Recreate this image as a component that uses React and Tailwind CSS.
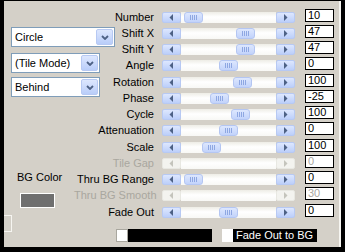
import React from "react";

const rows = [
  { label: "Number", value: "10", thumb: 22 },
  { label: "Shift X", value: "47", thumb: 74 },
  { label: "Shift Y", value: "47", thumb: 74 },
  { label: "Angle", value: "0", thumb: 57 },
  { label: "Rotation", value: "100", thumb: 71 },
  { label: "Phase", value: "-25", thumb: 48 },
  { label: "Cycle", value: "100", thumb: 69 },
  { label: "Attenuation", value: "0", thumb: 57 },
  { label: "Scale", value: "100", thumb: 40 },
  { label: "Tile Gap", value: "0", disabled: true },
  { label: "Thru BG Range", value: "0", thumb: 22 },
  { label: "Thru BG Smooth", value: "30", disabled: true },
  { label: "Fade Out", value: "0", thumb: 57 },
];

function Arrow({ dir, disabled }) {
  return (
    <div
      className={`w-[19px] h-full shrink-0 rounded-[2px] border flex items-center justify-center ${
        disabled
          ? "border-[#e8e8e2] bg-[#f3f3ef]"
          : "border-[#b7c9f3] bg-[linear-gradient(#dde7fe,#bccffa)]"
      }`}
    >
      <svg width="5" height="7" viewBox="0 0 5 7">
        <polygon
          points={dir === "left" ? "4,0 4,7 0.5,3.5" : "1,0 1,7 4.5,3.5"}
          fill={disabled ? "#c4c4bc" : "#4d6185"}
        />
      </svg>
    </div>
  );
}

function Slider({ thumb, disabled }) {
  return (
    <div className="w-[133px] h-[11px] flex">
      <Arrow dir="left" disabled={disabled} />
      <div className="relative flex-1 bg-[linear-gradient(#eeede6,#ffffff_45%,#f8f8f5)]">
        {thumb !== undefined && (
          <div
            className="absolute top-0 h-full w-[19px] rounded-[3px] border border-[#b4c6f2] bg-[linear-gradient(#dde7fe,#c2d3fb)] flex items-center justify-center gap-[1px]"
            style={{ left: thumb - 19 }}
          >
            <span className="w-[1px] h-[5px] bg-[#8ea7e2]" />
            <span className="w-[1px] h-[5px] bg-[#8ea7e2]" />
            <span className="w-[1px] h-[5px] bg-[#8ea7e2]" />
            <span className="w-[1px] h-[5px] bg-[#8ea7e2]" />
          </div>
        )}
      </div>
      <Arrow dir="right" disabled={disabled} />
    </div>
  );
}

function Combo({ text, width }) {
  return (
    <div
      className={`${width} h-[20px] shrink-0 border border-[#7f9db9] bg-white flex items-center justify-between pl-[3px] pr-[1px]`}
    >
      <span className="text-[11px] text-black">{text}</span>
      <div className="w-[17px] h-[16px] rounded-[2px] border border-[#b7c9f3] bg-[linear-gradient(#dde7fe,#b9cdf9)] flex items-center justify-center">
        <svg width="8" height="5" viewBox="0 0 8 5">
          <polyline points="1,1 4,4 7,1" fill="none" stroke="#4d6185" strokeWidth="1.8" />
        </svg>
      </div>
    </div>
  );
}

export default function App() {
  return (
    <div className="w-[345px] h-[252px] bg-black pl-[4px] pt-[1px] font-['Liberation_Sans',Arial,sans-serif]">
      <div className="w-[337px] h-[246px] bg-[#d4d0c8] border-r-2 border-[#f6f5f1] flex">
        <div className="w-[70px] shrink-0 flex flex-col">
          <div className="ml-[7px] mt-[26px] flex flex-col">
            <Combo text="Circle" width="w-[104px]" />
            <div className="mt-[6px]">
              <Combo text="(Tile Mode)" width="w-[89px]" />
            </div>
            <div className="mt-[4px]">
              <Combo text="Behind" width="w-[89px]" />
            </div>
          </div>
          <div className="mt-[74px] text-[11px] text-black ml-[13px] leading-[13px]">BG Color</div>
          <div className="mt-[9px] ml-[16px] w-[35px] h-[15px] border border-white bg-[#6f6f6f]" />
          <div className="mt-[7px] w-[8px] h-[17px] border-t border-r border-b border-[#f6f5f1]" />
        </div>
        <div className="flex flex-col pt-[8px]">
          {rows.map((r) => (
            <div key={r.label} className="h-[16.25px] flex items-center">
              <div
                className={`w-[80px] text-right text-[11px] leading-[13px] whitespace-nowrap ${
                  r.disabled ? "text-[#a9a79f]" : "text-black"
                }`}
              >
                {r.label}
              </div>
              <div className="ml-[8px]">
                <Slider thumb={r.thumb} disabled={r.disabled} />
              </div>
              <div
                className={`ml-[10px] mb-[4px] w-[29px] h-[13px] border border-black bg-white pl-[2px] text-[11px] leading-[11px] ${
                  r.disabled ? "text-[#a9a79f]" : "text-black"
                }`}
              >
                {r.value}
              </div>
            </div>
          ))}
          <div className="mt-[9px] ml-[42px] flex h-[13px]">
            <div className="w-[12px] h-full bg-white border border-[#a9a79f]" />
            <div className="w-[84px] h-full bg-black" />
            <div className="ml-[10px] w-[11px] h-full bg-white" />
            <div className="w-[84px] h-full bg-black text-white text-[11px] leading-[13px] pl-[3px] whitespace-nowrap">
              Fade Out to BG
            </div>
          </div>
        </div>
      </div>
    </div>
  );
}
